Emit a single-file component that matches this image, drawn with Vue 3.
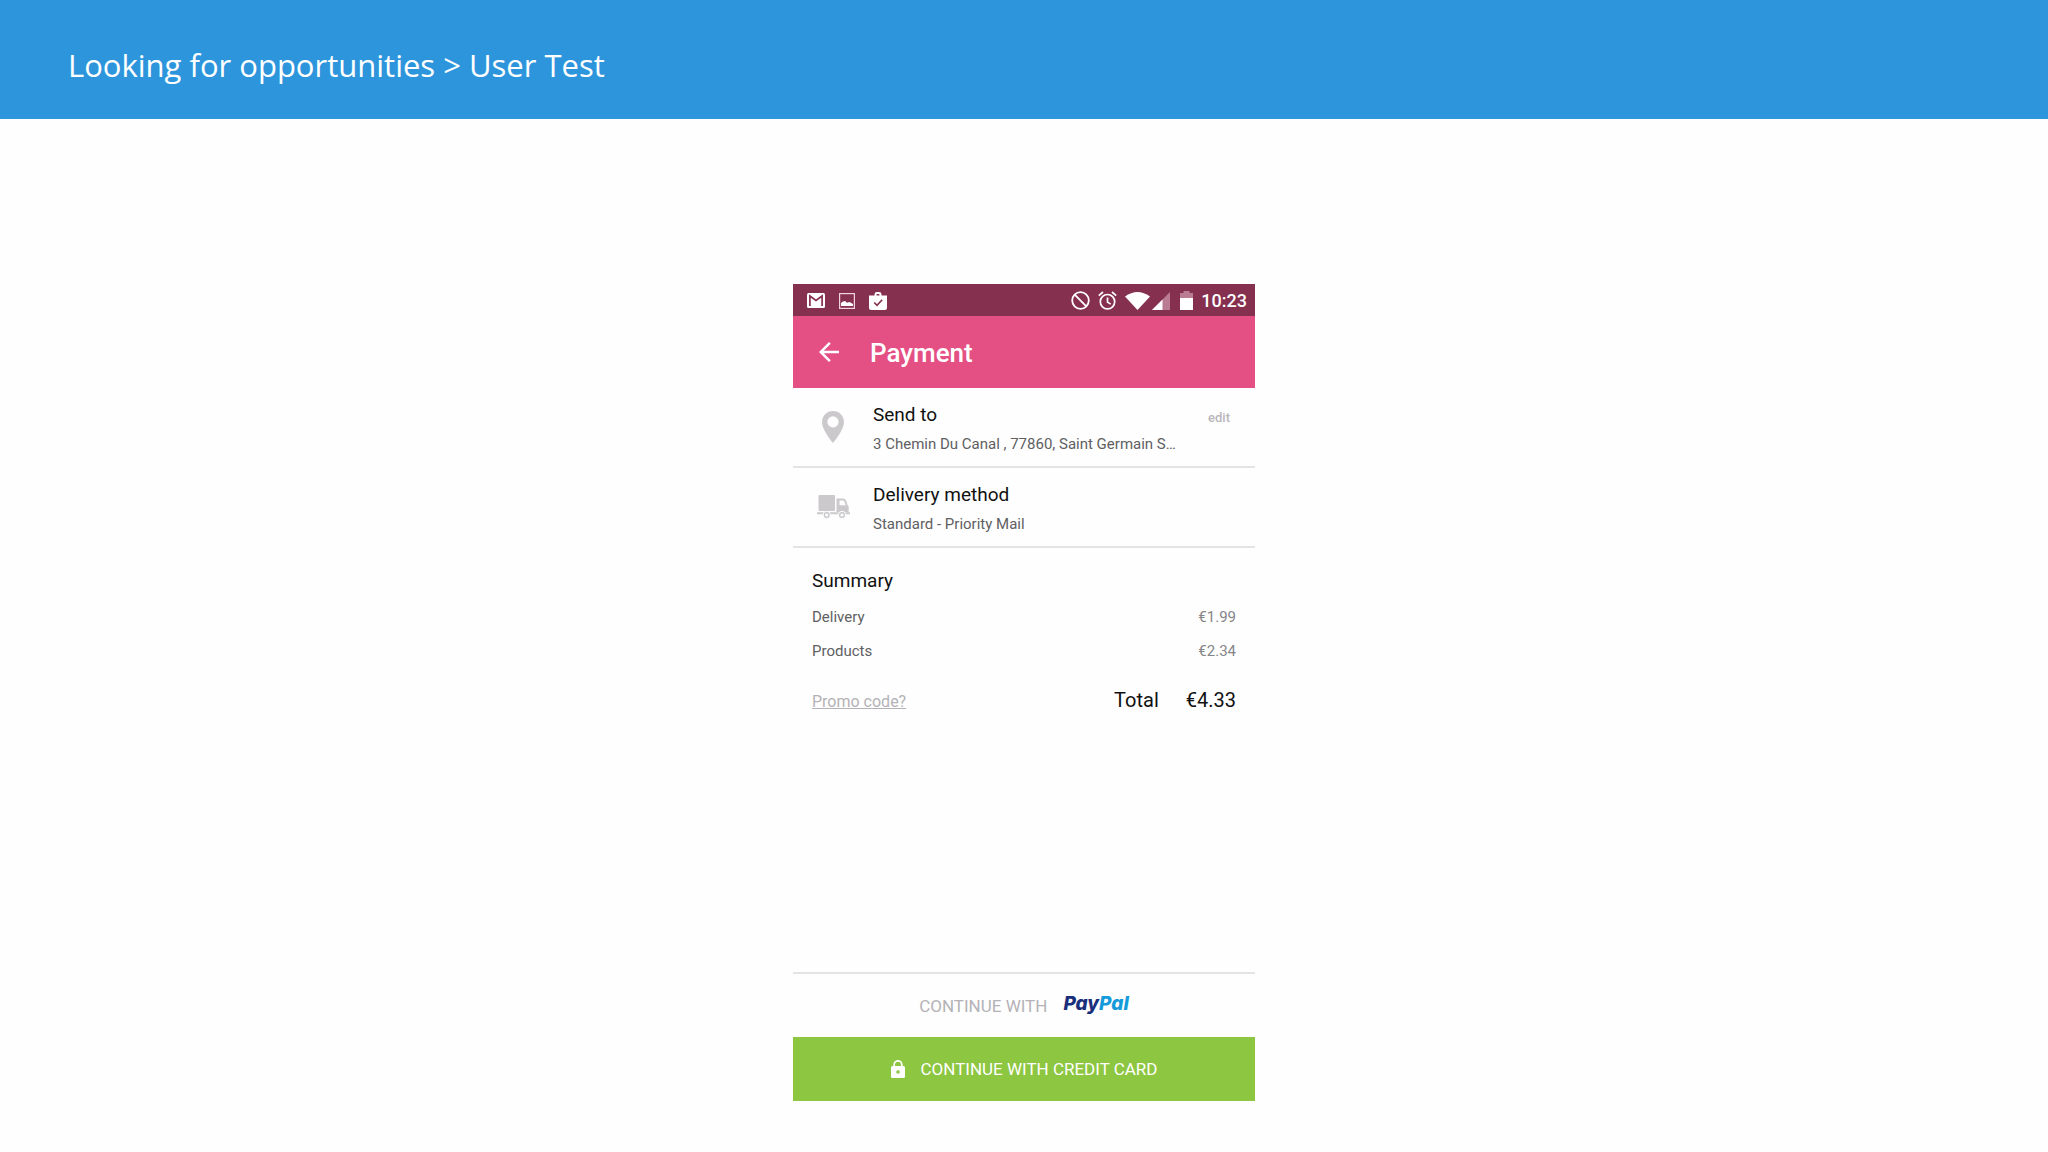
<template>
  <div class="page">
    <header class="slide-header">
      <h1 class="slide-title">Looking for opportunities &gt; User Test</h1>
    </header>

    <main class="stage">
      <section class="phone">
        <div class="status-bar">
          <div class="status-left">
            <!-- mail -->
            <svg width="18" height="15" viewBox="0 0 18 15" aria-hidden="true">
              <rect width="18" height="15" rx="1.5" fill="#fff" />
              <path d="M2.900 13V3L9 7.500 15.100 3V13" fill="none" stroke="#86304f" stroke-width="1.7" />
            </svg>
            <!-- picture -->
            <svg width="16" height="16" viewBox="0 0 16 16" aria-hidden="true">
              <rect x=".6" y=".6" width="14.8" height="14.8" fill="none" stroke="#f3d3df" stroke-width="1.2" />
              <path d="M2 13v-3l2-1.500 2-.5 2 1.800 2.500-.8 3.500 2v2z" fill="#fff" />
            </svg>
            <!-- store bag -->
            <svg width="18" height="18" viewBox="0 0 18 18" aria-hidden="true">
              <path d="M6.500 4V2.400Q6.500 1 8 1h2q1.500 0 1.500 1.400V4" fill="none" stroke="#fff" stroke-width="2" />
              <path d="M0 3.500h18V16q0 2-2 2H2q-2 0-2-2z" fill="#fff" />
              <path d="M5.200 10.500l2.800 2.800 5.200-5.600" fill="none" stroke="#86304f" stroke-width="1.600" />
            </svg>
          </div>
          <div class="status-right">
            <!-- blocked -->
            <svg width="19" height="19" viewBox="0 0 19 19" fill="none" stroke="#fff" stroke-width="1.8" aria-hidden="true">
              <circle cx="9.5" cy="9.5" r="8.3" />
              <path d="M3.700 3.700l11.600 11.600" />
            </svg>
            <!-- alarm -->
            <svg width="19" height="19" viewBox="0 0 19 19" fill="none" stroke="#fff" stroke-width="1.700" aria-hidden="true">
              <circle cx="9.500" cy="10.700" r="7.200" />
              <path d="M9.500 6.500v4.600l3.200 2M.8 4.600L5 1M18.200 4.600L14 1" />
            </svg>
            <div class="signal">
              <svg width="25" height="18" viewBox="0 0 25 18" aria-hidden="true">
                <path d="M0 4.500Q12.500-4.500 25 4.500L12.500 18z" fill="#fff" />
              </svg>
              <svg width="18" height="18" viewBox="0 0 18 18" aria-hidden="true">
                <path d="M18 0v18H0z" fill="#b97c93" />
                <path d="M10.500 7.500V18H0z" fill="#fff" />
              </svg>
            </div>
            <svg width="13" height="19" viewBox="0 0 13 19" aria-hidden="true">
              <path d="M0 8V2h3.500V0h6v2H13v6z" fill="#b97c93" />
              <path d="M0 7h13v12H0z" fill="#fff" />
            </svg>
            <span class="clock">10:23</span>
          </div>
        </div>

        <div class="app-bar">
          <button class="back-button" type="button" aria-label="Back">
            <svg width="20" height="20" viewBox="4 4 16 16" aria-hidden="true">
              <path d="M20 11H7.830l5.590-5.590L12 4l-8 8 8 8 1.410-1.410L7.830 13H20v-2z" fill="#fff" />
            </svg>
          </button>
          <h2 class="app-title">Payment</h2>
        </div>

        <div class="info-row">
          <svg class="row-icon" width="22" height="32" viewBox="0 0 22 32" aria-hidden="true">
            <path
              d="M11 0C4.900 0 0 4.900 0 11c0 8.300 11 21 11 21s11-12.700 11-21C22 4.900 17.100 0 11 0zm0 16.500a5.600 5.600 0 1 1 0-11.200 5.600 5.600 0 0 1 0 11.200z"
              fill="#cbc9cc"
            />
          </svg>
          <div class="row-text">
            <h3 class="row-title">Send to</h3>
            <p class="row-detail">3 Chemin Du Canal , 77860, Saint Germain S…</p>
          </div>
          <a class="edit-link" href="#">edit</a>
        </div>

        <div class="info-row">
          <svg class="row-icon" width="33" height="24" viewBox="0 0 33 24" aria-hidden="true">
            <rect x="1.500" width="16.500" height="16" rx="1" fill="#cbc9cc" />
            <path d="M19.500 3.500h6q3 0 4 3l1.200 4 1 1V17H19.500zM22.500 5.500v4.800h6.300l-1.300-3.600q-.5-1.200-1.700-1.200z" fill="#cbc9cc" fill-rule="evenodd" />
            <path d="M0 17.200h33v2H0z" fill="#cbc9cc" />
            <g fill="#cbc9cc" stroke="#fefefe">
              <circle cx="9.700" cy="20" r="3.700" />
              <circle cx="25" cy="20" r="3.700" />
            </g>
            <circle cx="9.700" cy="20" r="1.600" fill="#fefefe" />
            <circle cx="25" cy="20" r="1.600" fill="#fefefe" />
          </svg>
          <div class="row-text">
            <h3 class="row-title">Delivery method</h3>
            <p class="row-detail">Standard - Priority Mail</p>
          </div>
        </div>

        <div class="summary">
          <h3 class="row-title">Summary</h3>
          <dl class="lines">
            <div v-for="line in lines" :key="line.label" class="line">
              <dt>{{ line.label }}</dt>
              <dd>{{ line.price }}</dd>
            </div>
          </dl>
          <div class="total-row">
            <a class="promo-link" href="#">Promo code?</a>
            <p class="total">
              <span>Total</span>
              <span>{{ total }}</span>
            </p>
          </div>
        </div>

        <button class="paypal-button" type="button">
          <span>CONTINUE WITH</span>
          <span class="paypal-logo">Pay<span class="pal">Pal</span></span>
        </button>
        <button class="card-button" type="button">
          <svg width="14" height="18" viewBox="0 0 14 18" aria-hidden="true">
            <path d="M3.200 7V4.600a3.800 3.800 0 0 1 7.600 0V7" fill="none" stroke="#fff" stroke-width="1.700" />
            <path d="M1.500 6h11Q14 6 14 7.500v9q0 1.500-1.500 1.500h-11Q0 18 0 16.500v-9Q0 6 1.500 6zM7 10.200a1.800 1.800 0 1 0 0 3.600 1.800 1.800 0 0 0 0-3.600z" fill="#fff" fill-rule="evenodd" />
          </svg>
          <span>CONTINUE WITH CREDIT CARD</span>
        </button>
      </section>
    </main>
  </div>
</template>

<script setup>
import { ref } from 'vue'

const lines = ref([
  { label: 'Delivery', price: '€1.99' },
  { label: 'Products', price: '€2.34' },
])
const total = ref('€4.33')
</script>

<style>
body {
  margin: 0;
  background: #fefefe;
}
</style>

<style scoped>
.page {
  display: flex;
  flex-direction: column;
  min-height: 100vh;
  font-family: Roboto, sans-serif;
  color: #111;
}

h1,
h2,
h3,
p,
dl,
dd {
  margin: 0;
  font-weight: 400;
}

button {
  border: 0;
  padding: 0;
  background: none;
  font-family: inherit;
  cursor: pointer;
}

svg {
  display: block;
  flex: none;
}

.slide-header {
  padding: 43px 68px 32px;
  background: #2d95dc;
}

.slide-title {
  font-family: 'Open Sans', sans-serif;
  font-size: 31px;
  font-weight: 400;
  line-height: 44px;
  color: #fff;
}

.stage {
  flex: 1;
  display: flex;
  justify-content: center;
  padding: 165px 0 51px;
}

.phone {
  display: flex;
  flex-direction: column;
  width: 100%;
  max-width: 462px;
}

.status-bar {
  display: flex;
  align-items: center;
  justify-content: space-between;
  box-sizing: border-box;
  height: 32px;
  padding: 1px 8px 0 14px;
  background: #86304f;
}

.status-left {
  display: flex;
  align-items: center;
  gap: 14px;
}

.status-right {
  display: flex;
  align-items: center;
  gap: 8px;
}

.signal {
  display: flex;
  gap: 2px;
  margin-right: 2px;
}

.clock {
  font-size: 18px;
  font-weight: 500;
  line-height: 24px;
  color: #fff;
}

.app-bar {
  display: flex;
  align-items: center;
  gap: 31px;
  height: 72px;
  padding: 0 26px;
  background: #e45083;
}

.app-title {
  padding-top: 2px;
  font-size: 26px;
  font-weight: 500;
  line-height: 32px;
  color: #fff;
}

.info-row {
  display: grid;
  grid-template-columns: 80px 1fr auto;
  padding: 15px 25px 12px 0;
  border-bottom: 2px solid #e4e4e4;
}

.row-icon {
  place-self: center;
  padding-bottom: 3px;
}

.row-text {
  display: grid;
  gap: 7px;
  min-width: 0;
}

.row-title {
  font-size: 19px;
  line-height: 24px;
}

.row-detail {
  font-size: 15px;
  line-height: 20px;
  color: #606062;
  white-space: nowrap;
}

.edit-link {
  padding-top: 5px;
  font-size: 13px;
  font-weight: 500;
  line-height: 20px;
  color: #b9b7bb;
  text-decoration: none;
}

.summary {
  flex: 1;
  padding: 21px 19px 24px;
}

.lines {
  display: grid;
  gap: 14px;
  margin: 14px 0 27px;
  font-size: 15px;
  line-height: 20px;
}

.line {
  display: flex;
  justify-content: space-between;
  color: #606062;
}

.line dd {
  color: #858587;
}

.total-row {
  display: flex;
  align-items: baseline;
  justify-content: space-between;
}

.promo-link {
  font-size: 16px;
  line-height: 20px;
  color: #b4b2b6;
}

.total {
  display: flex;
  gap: 27px;
  font-size: 20px;
  line-height: 24px;
}

.paypal-button {
  display: flex;
  align-items: center;
  justify-content: center;
  gap: 16px;
  height: 65px;
  border-top: 2px solid #e4e4e4;
  font-size: 17px;
  line-height: 24px;
  color: #b4b2b6;
}

.paypal-logo {
  padding-bottom: 3px;
  font-family: Inter, sans-serif;
  font-feature-settings: 'cv11';
  font-size: 19px;
  font-style: italic;
  font-weight: 800;
  color: #1a2f7c;
}

.pal {
  color: #159bd9;
}

.card-button {
  display: flex;
  align-items: center;
  justify-content: center;
  gap: 16px;
  height: 64px;
  background: #8dc641;
  font-size: 17px;
  line-height: 24px;
  color: #fff;
}
</style>
